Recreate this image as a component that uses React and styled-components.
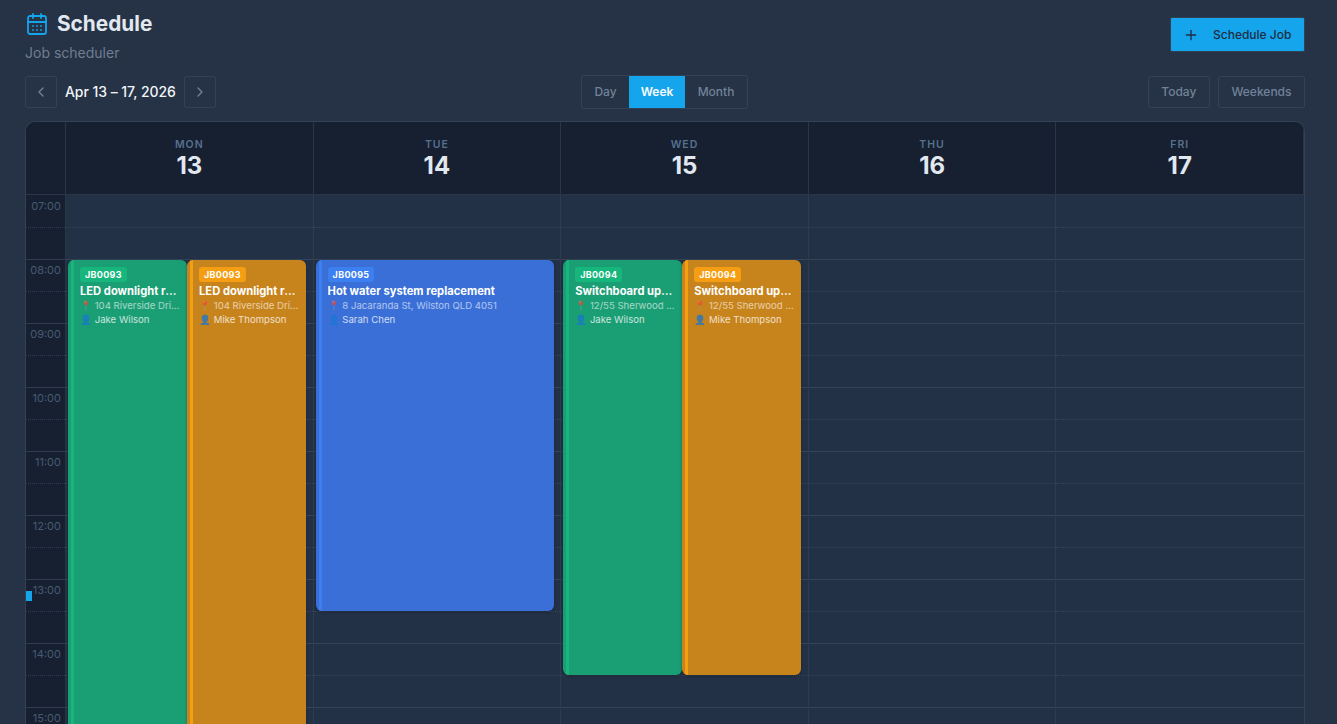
import React from 'react';
import styled, { createGlobalStyle } from 'styled-components';
import { CalendarDays, ChevronLeft, ChevronRight, Plus } from 'lucide-react';

const HOURS = ['07:00', '08:00', '09:00', '10:00', '11:00', '12:00', '13:00', '14:00', '15:00', '16:00'];

const TONES = {
    green: { fill: '#1a9e74', strip: '#16b67c', badge: '#16b67c' },
    orange: { fill: '#c8841c', strip: '#f59e14', badge: '#f59e14' },
    blue: { fill: '#3a6fd8', strip: '#3b7ff0', badge: '#3b7ff0' }
};

const DAYS = [
    {
        name: 'MON',
        date: 13,
        events: [
            { id: 'JB0093', title: 'LED downlight retrofit', address: '104 Riverside Drive, Newmarket', who: 'Jake Wilson', tone: 'green', hours: 11, slot: 0, split: true },
            { id: 'JB0093', title: 'LED downlight retrofit', address: '104 Riverside Drive, Newmarket', who: 'Mike Thompson', tone: 'orange', hours: 11, slot: 1, split: true }
        ]
    },
    {
        name: 'TUE',
        date: 14,
        events: [
            { id: 'JB0095', title: 'Hot water system replacement', address: '8 Jacaranda St, Wilston QLD 4051', who: 'Sarah Chen', tone: 'blue', hours: 5.5, slot: 0 }
        ]
    },
    {
        name: 'WED',
        date: 15,
        events: [
            { id: 'JB0094', title: 'Switchboard upgrade', address: '12/55 Sherwood Road, Toowong', who: 'Jake Wilson', tone: 'green', hours: 6.5, slot: 0, split: true },
            { id: 'JB0094', title: 'Switchboard upgrade', address: '12/55 Sherwood Road, Toowong', who: 'Mike Thompson', tone: 'orange', hours: 6.5, slot: 1, split: true }
        ]
    },
    { name: 'THU', date: 16, events: [] },
    { name: 'FRI', date: 17, events: [] }
];

const GlobalStyle = createGlobalStyle`
    html, body {
        margin: 0;
        height: 100%;
        overflow: hidden;
        background: #263245;
    }
    body {
        font-family: Inter, "Liberation Sans", sans-serif;
    }
`;

const Page = styled.div`
    height: 100vh;
    box-sizing: border-box;
    padding: 9px 32px 0 25px;
    display: flex;
    flex-direction: column;
    overflow: hidden;
`;

const PageHeader = styled.header`
    display: flex;
    justify-content: space-between;
    align-items: flex-start;
    height: 66px;
    flex: none;
`;

const TitleRow = styled.div`
    display: flex;
    align-items: center;
    gap: 8px;
    color: #14a5ec;
`;

const Title = styled.h1`
    margin: 0;
    font-size: 20.8px;
    line-height: 30px;
    font-weight: 700;
    color: #e2e8f0;
`;

const Subtitle = styled.div`
    margin-top: 5px;
    font-size: 14px;
    line-height: 18px;
    color: #6f7d92;
`;

const PrimaryButton = styled.button`
    display: flex;
    align-items: center;
    gap: 14px;
    margin-top: 8px;
    height: 35px;
    width: 135px;
    box-sizing: border-box;
    padding: 0 12px;
    font: 500 12px Inter, sans-serif;
    white-space: nowrap;
    color: #1e2d42;
    background: #14a5ec;
    border: 1px solid #334155;
    border-radius: 2px;
`;

const Toolbar = styled.div`
    display: grid;
    grid-template-columns: 1fr auto 1fr;
    align-items: center;
    height: 33px;
    margin-bottom: 13px;
    flex: none;
`;

const DateNav = styled.div`
    display: flex;
    align-items: center;
    gap: 8px;
`;

const NavButton = styled.button`
    display: flex;
    align-items: center;
    justify-content: center;
    width: 32px;
    height: 32px;
    padding: 0;
    color: #718299;
    background: transparent;
    border: 1px solid #334155;
    border-radius: 2px;
`;

const DateLabel = styled.span`
    font-size: 14px;
    line-height: 30px;
    font-weight: 500;
    letter-spacing: -0.06px;
    color: #f1f5f9;
`;

const Segment = styled.div`
    display: flex;
    height: 34px;
    margin-right: 1px;
    box-sizing: border-box;
    border: 1px solid #334155;
    border-radius: 2px;
`;

const SegmentItem = styled.button`
    width: ${(props) => props.$width}px;
    padding: 0 0 2px;
    font: ${(props) => (props.$active ? 600 : 500)} 12px Inter, sans-serif;
    color: ${(props) => (props.$active ? '#f8fafc' : '#718299')};
    background: ${(props) => (props.$active ? '#14a5ec' : 'transparent')};
    border: 0;
`;

const RightActions = styled.div`
    display: flex;
    justify-content: flex-end;
    gap: 8px;
`;

const GhostButton = styled.button`
    height: 32px;
    padding: 0 12.5px 2px;
    font: 500 12px Inter, sans-serif;
    color: #718299;
    background: transparent;
    border: 1px solid #334155;
    border-radius: 2px;
`;

const Calendar = styled.section`
    flex: 1;
    min-height: 0;
    overflow: hidden;
    background: #233146;
    border: 1px solid #334155;
    border-bottom: 0;
    border-radius: 10px 10px 0 0;
    display: grid;
    grid-template-columns: 40px repeat(5, 1fr);
    grid-template-rows: 73px 1fr;
`;

const Corner = styled.div`
    background: #162030;
    border-right: 1px solid #2a3648;
    border-bottom: 1px solid #2a3648;
`;

const DayHead = styled.div`
    display: flex;
    flex-direction: column;
    align-items: center;
    padding-top: 16px;
    box-sizing: border-box;
    background: #162030;
    border-right: 1px solid #2a3648;
    border-bottom: 1px solid #2a3648;
    &:last-of-type {
        border-right: 0;
    }
`;

const DayName = styled.span`
    font-size: 10.5px;
    line-height: 13px;
    font-weight: 600;
    letter-spacing: 1px;
    color: #56708f;
`;

const DayDate = styled.span`
    margin-top: 1px;
    font-size: 24px;
    line-height: 28px;
    font-weight: 700;
    color: #e2e8f0;
`;

const TimeColumn = styled.div`
    position: relative;
    background: #162030;
    border-right: 1px solid #2a3648;
`;

const TimeSlot = styled.div`
    position: relative;
    height: 64px;
    box-sizing: border-box;
    padding: 3px 4px 0 0;
    text-align: right;
    font-size: 11px;
    line-height: 14px;
    color: #475a75;
    border-top: 1px solid #2f3b4e;
    &:first-child {
        border-top-color: transparent;
    }
    &::after {
        content: '';
        position: absolute;
        left: 0;
        right: 0;
        top: 31px;
        border-top: 1px dotted #2f3b4e;
    }
`;

const NowMarker = styled.div`
    position: absolute;
    left: 0;
    top: 396px;
    width: 6px;
    height: 10px;
    background: #14a5ec;
`;

const DayColumn = styled.div`
    position: relative;
    border-right: 1px solid #2f3b4e;
    &:last-child {
        border-right: 0;
    }
`;

const HourRow = styled.div`
    height: 64px;
    box-sizing: border-box;
    border-top: 1px solid #364459;
    &:first-child {
        border-top-color: transparent;
    }
    &::before {
        content: '';
        display: block;
        height: 31px;
        border-bottom: 1px dotted #364459;
    }
`;

const EventCard = styled.article`
    position: absolute;
    top: 65px;
    height: ${(props) => props.$hours * 64 - 1}px;
    left: ${(props) => (props.$split ? `calc(2px + ${props.$slot} * (100% - 8.5px) / 2)` : '2px')};
    width: ${(props) => (props.$split ? 'calc((100% - 8.5px) / 2)' : 'calc(100% - 8.5px)')};
    box-sizing: border-box;
    padding: 7px 7px 0 12px;
    overflow: hidden;
    color: #fff;
    background: ${(props) => TONES[props.$tone].fill};
    border-radius: 6px;
    box-shadow: 0 1px 3px rgba(0, 0, 0, 0.3);
    &::before {
        content: '';
        position: absolute;
        left: 3px;
        top: 0;
        bottom: 0;
        width: 3px;
        background: ${(props) => TONES[props.$tone].strip};
    }
`;

const Badge = styled.span`
    display: block;
    width: fit-content;
    padding: 0 5px;
    font-size: 9px;
    line-height: 15px;
    font-weight: 700;
    letter-spacing: 0.3px;
    background: ${(props) => TONES[props.$tone].badge};
    border-radius: 3px;
`;

const EventTitle = styled.div`
    margin-top: 2px;
    font-size: 11.2px;
    line-height: 14px;
    font-weight: 700;
    white-space: nowrap;
    overflow: hidden;
    text-overflow: ellipsis;
`;

const EventLine = styled.div`
    margin-top: 0.5px;
    font-size: 9.6px;
    line-height: 13.5px;
    white-space: nowrap;
    overflow: hidden;
    text-overflow: ellipsis;
    opacity: ${(props) => props.$opacity};
`;

function JobEvent({ event }) {
    return (
        <EventCard $tone={event.tone} $hours={event.hours} $slot={event.slot} $split={event.split}>
            <Badge $tone={event.tone}>{event.id}</Badge>
            <EventTitle>{event.title}</EventTitle>
            <EventLine $opacity={0.6}>📍 {event.address}</EventLine>
            <EventLine $opacity={0.75}>👤 {event.who}</EventLine>
        </EventCard>
    );
}

export default function App() {
    return (
        <Page>
            <GlobalStyle />
            <PageHeader>
                <div>
                    <TitleRow>
                        <CalendarDays size={24} strokeWidth={1.8} />
                        <Title>Schedule</Title>
                    </TitleRow>
                    <Subtitle>Job scheduler</Subtitle>
                </div>
                <PrimaryButton>
                    <Plus size={16} />
                    Schedule Job
                </PrimaryButton>
            </PageHeader>
            <Toolbar>
                <DateNav>
                    <NavButton>
                        <ChevronLeft size={16} />
                    </NavButton>
                    <DateLabel>Apr 13 – 17, 2026</DateLabel>
                    <NavButton>
                        <ChevronRight size={16} />
                    </NavButton>
                </DateNav>
                <Segment>
                    <SegmentItem $width={47}>Day</SegmentItem>
                    <SegmentItem $width={56} $active>
                        Week
                    </SegmentItem>
                    <SegmentItem $width={62}>Month</SegmentItem>
                </Segment>
                <RightActions>
                    <GhostButton>Today</GhostButton>
                    <GhostButton>Weekends</GhostButton>
                </RightActions>
            </Toolbar>
            <Calendar>
                <Corner />
                {DAYS.map((day) => (
                    <DayHead key={day.name}>
                        <DayName>{day.name}</DayName>
                        <DayDate>{day.date}</DayDate>
                    </DayHead>
                ))}
                <TimeColumn>
                    {HOURS.map((hour) => (
                        <TimeSlot key={hour}>{hour}</TimeSlot>
                    ))}
                    <NowMarker />
                </TimeColumn>
                {DAYS.map((day) => (
                    <DayColumn key={day.name}>
                        {HOURS.map((hour) => (
                            <HourRow key={hour} />
                        ))}
                        {day.events.map((event) => (
                            <JobEvent key={event.who + event.id} event={event} />
                        ))}
                    </DayColumn>
                ))}
            </Calendar>
        </Page>
    );
}
